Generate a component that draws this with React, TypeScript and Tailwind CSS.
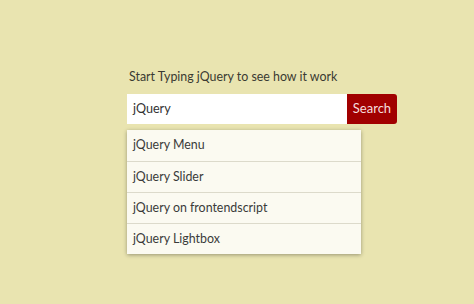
export default function App() {
  const items = ["jQuery Menu", "jQuery Slider", "jQuery on frontendscript", "jQuery Lightbox"];
  return (
    <div className="w-[474px] h-[304px] bg-[#e9e4b0] overflow-hidden" style={{ fontFamily: "Lato, 'Open Sans', sans-serif" }}>
      <div className="pt-[68px] pl-[127px]">
        <div className="pl-[2px] text-[12.4px] text-[#3a3a32] leading-[18px]">Start Typing jQuery to see how it work</div>
        <div className="mt-[8px] flex h-[30px]">
          <div className="w-[220px] bg-white flex items-center pl-[6px] text-[12.6px] text-[#333]">jQuery</div>
          <div className="w-[50px] bg-[#a10000] rounded-r-[3px] flex items-center justify-center text-[13px] text-[#f5dede]">Search</div>
        </div>
        <div className="mt-[6px] w-[234px] bg-[#fbfaf1] shadow-[0_1px_4px_rgba(0,0,0,0.35)]">
          {items.map((t, i) => (
            <div key={t} className={`h-[31px] flex items-center pl-[6px] text-[12.4px] text-[#3a3a3a] ${i > 0 ? "border-t border-[#dcdacb]" : ""}`}>{t}</div>
          ))}
        </div>
      </div>
    </div>
  );
}
